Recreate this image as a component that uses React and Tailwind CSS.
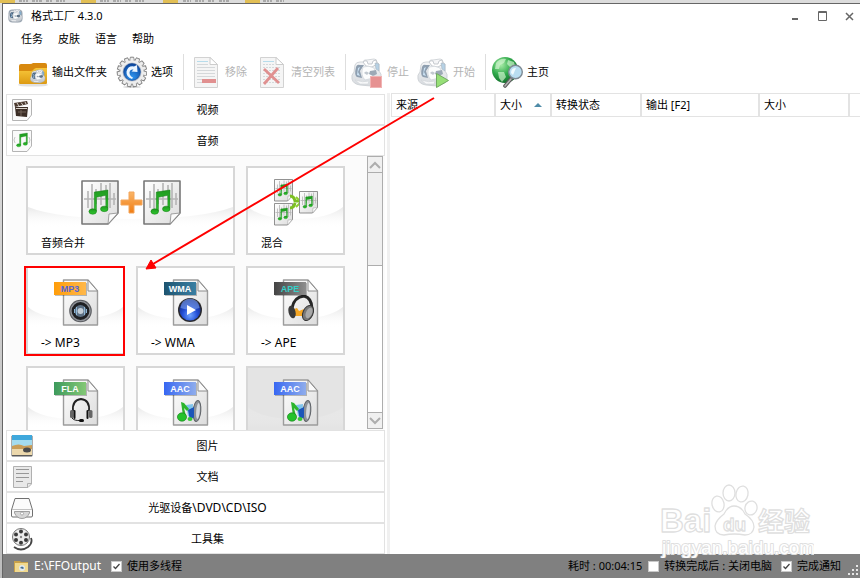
import React from "react";

const FONT = "font-['Noto_Sans','Noto_Sans_CJK_SC',sans-serif]";

/* ---------- gradients shared by the drawings ---------- */
function Defs() {
  return (
    <svg width="0" height="0" className="absolute" aria-hidden="true">
      <defs>
        <linearGradient id="paper" x1="0" y1="0" x2="1" y2="1">
          <stop offset="0" stopColor="#ffffff" />
          <stop offset="1" stopColor="#dcdcdc" />
        </linearGradient>
        <linearGradient id="gold" x1="0" y1="0" x2="0" y2="1">
          <stop offset="0" stopColor="#f9c93c" />
          <stop offset="1" stopColor="#dd9a12" />
        </linearGradient>
        <linearGradient id="green" x1="0" y1="0" x2="0" y2="1">
          <stop offset="0" stopColor="#1f9a1f" />
          <stop offset="1" stopColor="#2fc62f" />
        </linearGradient>
        <linearGradient id="orange" x1="0" y1="0" x2="0" y2="1">
          <stop offset="0" stopColor="#fbb668" />
          <stop offset="1" stopColor="#f07c12" />
        </linearGradient>
        <linearGradient id="shell" x1="0" y1="0" x2="0" y2="1">
          <stop offset="0" stopColor="#f4f5f7" />
          <stop offset="1" stopColor="#bcc2c9" />
        </linearGradient>
        <radialGradient id="blue" cx=".5" cy=".75" r=".7">
          <stop offset="0" stopColor="#6fa4ff" />
          <stop offset=".5" stopColor="#2450d8" />
          <stop offset="1" stopColor="#10247c" />
        </radialGradient>
        <radialGradient id="gearCore" cx=".5" cy=".8" r=".8">
          <stop offset="0" stopColor="#2f94ee" />
          <stop offset="1" stopColor="#0b459c" />
        </radialGradient>
        <radialGradient id="globe" cx=".35" cy=".3" r=".8">
          <stop offset="0" stopColor="#a8eca8" />
          <stop offset=".5" stopColor="#2fa94a" />
          <stop offset="1" stopColor="#0c5f24" />
        </radialGradient>
        <linearGradient id="swoosh" x1="0" y1="0" x2="0" y2="1">
          <stop offset="0" stopColor="#e9e9e9" />
          <stop offset="1" stopColor="#ffffff" stopOpacity="0" />
        </linearGradient>
        <linearGradient id="tagMp3"><stop offset="0" stopColor="#ff9d0a" /><stop offset="1" stopColor="#ffb84a" /></linearGradient>
        <linearGradient id="tagWma"><stop offset="0" stopColor="#1d5470" /><stop offset="1" stopColor="#3a7fa3" /></linearGradient>
        <linearGradient id="tagApe"><stop offset="0" stopColor="#444444" /><stop offset="1" stopColor="#8e8e8e" /></linearGradient>
        <linearGradient id="tagFla"><stop offset="0" stopColor="#3d9a5c" /><stop offset="1" stopColor="#84c876" /></linearGradient>
        <linearGradient id="tagAac"><stop offset="0" stopColor="#3767f2" /><stop offset="1" stopColor="#8fadec" /></linearGradient>
      </defs>
    </svg>
  );
}

/* ---------- small drawings ---------- */
function Machine() {
  return (
    <g strokeLinejoin="round">
      <path d="M1 21 Q0 17 3 14 L4 7 Q5 4 9 4 L12 4 Q13 1 16 2 L23 1 Q26 1 26 4 L28 6 L28 13 Q31 16 30 20 Q30 25 25 26 L20 28 L9 27 Q2 26 1 21Z" fill="url(#shell)" stroke="#a5acb4" strokeWidth=".8" />
      <path d="M12 4 Q14 2 16 3 L17 6 L21 6 L22 3 L25 2 L26 6 L21 9 L15 8Z" fill="#ffffff" stroke="#8d96a0" strokeWidth=".8" />
      <path d="M5 9 Q6 6 9 7 L13 7 L9 13 L11 20 L6 19 Q3 17 5 9Z" fill="#45607c" />
      <path d="M7 10 L9 9 L7 14 L9 18 L6 17Z" fill="#a9d0ee" />
      <path d="M12 9 Q18 7 23 10 Q26 15 22 20 L14 22 Q9 17 12 9Z" fill="#fbfcfd" stroke="#b3bbc4" strokeWidth=".8" />
      <path d="M19 13 L25 12 L26 16 L22 18 L18 16Z" fill="#5b7186" />
      <path d="M13 15 Q15 12 18 15 L16 17Z" fill="#9aa6b2" />
      <path d="M24 5 L28 6 L28 13 L25 11Z" fill="#86b4d4" stroke="#6c8499" strokeWidth=".6" />
      <path d="M4 22 Q12 25 18 23 L17 26 L9 26Z" fill="#f3f4f6" stroke="#b1b8c0" strokeWidth=".6" />
    </g>
  );
}

function AppIcon() {
  return (
    <svg width="15" height="14" viewBox="0 0 32 30" aria-hidden="true">
      <rect x="1" y="1" width="30" height="28" rx="8" fill="#9ba6b2" />
      <Machine />
    </svg>
  );
}

function FolderIcon() {
  return (
    <svg width="32" height="32" viewBox="0 0 32 32" aria-hidden="true">
      <ellipse cx="17" cy="29" rx="15" ry="1.6" fill="#e1e1e1" />
      <path d="M3 10 Q3 8 5 8 L14 8 Q16 8 17 7 Q18 7 20 7 L29 7 Q31 7 31 9 L31 26 L3 26Z" fill="#d8890f" />
      <path d="M3 15 L15 15 Q17 15 18 13 L20 12 L31 12 L31 27 Q31 28 30 28 L4 28 Q3 28 3 27Z" fill="url(#gold)" />
      <g transform="translate(14 13) scale(.5)">
        <Machine />
      </g>
    </svg>
  );
}

const TEETH = [0, 24, 48, 72, 96, 120, 144, 168, 192, 216, 240, 264, 288, 312, 336];

function GearIcon() {
  return (
    <svg width="32" height="32" viewBox="0 0 32 32" aria-hidden="true">
      <ellipse cx="17" cy="31" rx="9" ry="1" fill="#d9d9d9" />
      {TEETH.map((a) => (
        <path key={a} d="M14.800 4.500 L15.400 1.200 H18.600 L19.200 4.500Z" fill="#ededed" stroke="#858585" strokeWidth="1" transform={`rotate(${a} 17 16)`} />
      ))}
      <circle cx="17" cy="16" r="12.200" fill="#ededed" stroke="#999999" strokeWidth=".8" />
      {TEETH.map((a) => (
        <path key={a} d="M15.600 5.500 V2.200 H18.400 V5.500Z" fill="#ededed" transform={`rotate(${a} 17 16)`} />
      ))}
      <circle cx="17" cy="16" r="9.600" fill="#bfc7d1" />
      <circle cx="17" cy="16" r="8.400" fill="url(#gearCore)" stroke="#0d3f8f" strokeWidth=".6" />
      <path d="M17 23 Q11 21 11.500 15.500 Q13 9.500 19 10.500 L22 9 L22.500 16 L16.500 15.500 L18.500 13.500 Q15 13 14.500 16.500 Q14.500 20 18 21.500Z" fill="#eaf5ff" />
    </svg>
  );
}

function DocIcon({ kind }) {
  return (
    <svg width="32" height="32" viewBox="0 0 32 32" aria-hidden="true">
      <path d="M5.500 1.500 H21 L28.500 8.500 V31.500 H5.500Z" fill="#f5f5f5" stroke="#d2d2d2" />
      <path d="M21 1.500 V8.500 H28.500Z" fill="#ffffff" stroke="#cccccc" />
      <path d="M8 5.500 H19" stroke="#b7dceb" />
      <path
        d="M8 8.500 H19 M8 11.500 H26 M8 14.500 H26 M8 17.500 H26 M8 20.500 H26 M8 23.500 H26 M8 26.500 H26"
        stroke="#d5d8da"
        strokeDasharray={kind === "clear" ? "2 1" : undefined}
      />
      {kind === "remove" ? (
        <rect x="13" y="23" width="14" height="4" fill="#e19090" />
      ) : (
        <path d="M9 13 L24 27 M23 12 L9 28" stroke="#e09090" strokeWidth="2.800" />
      )}
    </svg>
  );
}

function MachineIcon({ kind }) {
  return (
    <svg width="32" height="32" viewBox="0 0 32 32" aria-hidden="true">
      <g opacity=".6" transform="translate(0 2)">
        <Machine />
      </g>
      {kind === "stop" ? (
        <rect x="19.500" y="20.500" width="11" height="11" fill="#e69191" stroke="#f0b3b3" />
      ) : (
        <path d="M19.500 17.500 L31.500 24.500 L19.500 31.500Z" fill="#97df77" stroke="#71a962" />
      )}
    </svg>
  );
}

function GlobeIcon() {
  return (
    <svg width="32" height="32" viewBox="0 0 32 32" aria-hidden="true">
      <circle cx="14" cy="14" r="13" fill="url(#globe)" />
      <path d="M5 7 Q9 2 15 3 L13 7 L9 9 L8 13 L4 13Z M17 4 L23 6 L24 10 L19 11 L16 8Z M7 16 L13 16 L15 21 L11 26 L8 22Z" fill="#d8f7d5" opacity=".65" />
      <path d="M20 23 L14 30" stroke="#5e5e5e" strokeWidth="3.600" strokeLinecap="round" />
      <path d="M20 23 L14 30" stroke="#b5b5b5" strokeWidth="1.500" strokeLinecap="round" />
      <circle cx="24.500" cy="16" r="6.800" fill="#b9def1" stroke="#7e8a94" strokeWidth="1.400" />
      <path d="M20 17 Q20 12 25 12 L22 19Z" fill="#f0fbff" />
    </svg>
  );
}

function Notes({ x, y, s }) {
  return (
    <g transform={`translate(${x} ${y}) scale(${s})`} fill="url(#green)" stroke="#117a11" strokeWidth=".5">
      <path d="M6 2 L19 0 L19 17 L17 17 L17 5 L8 7 L8 20 L6 20Z" />
      <ellipse cx="4.500" cy="20.500" rx="3.600" ry="2.600" />
      <ellipse cx="15.500" cy="18" rx="3.600" ry="2.600" />
    </g>
  );
}

function MusicSheet({ x, y, s }) {
  return (
    <g transform={`translate(${x} ${y}) scale(${s})`}>
      <path d="M1 1 H37 V33 L27 44 H1Z" fill="url(#paper)" stroke="#777777" strokeWidth="1.600" strokeLinejoin="round" />
      <path d="M3 19 H35 M7 11 V28 M11 4 V30 M15 9 V24 M20 3 V25 M25 5 V19 M29 3 V28 M33 13 V25" stroke="#b5b5b5" strokeWidth="1.600" />
      <path d="M27 44 L28 34 L37 33Z" fill="#fafafa" stroke="#8c8c8c" strokeWidth=".8" />
      <Notes x="7" y="10" s="1.050" />
    </g>
  );
}

function MergeIcon() {
  return (
    <svg width="102" height="48" viewBox="0 0 102 48" aria-hidden="true">
      <MusicSheet x="1" y="2" s="1" />
      <path d="M49 14 H54 V22 H62 V27 H54 V35 H49 V27 H41 V22 H49Z" fill="url(#orange)" stroke="#f3a55a" />
      <MusicSheet x="63" y="2" s="1" />
    </svg>
  );
}

function MixIcon() {
  return (
    <svg width="46" height="48" viewBox="0 0 46 48" aria-hidden="true">
      <MusicSheet x="1" y="1" s=".500" />
      <MusicSheet x="1" y="25" s=".500" />
      <path d="M17 18 Q21 18 22 23 H28 M17 30 Q21 30 22 25" fill="none" stroke="#7cbf22" strokeWidth="3" />
      <path d="M23 19 L28 24 L23 29" fill="none" stroke="#8ed02e" strokeWidth="2" />
      <MusicSheet x="26" y="13" s=".500" />
    </svg>
  );
}

function FormatArt({ art }) {
  if (art === "speaker")
    return (
      <g>
        <circle cx="26.500" cy="33" r="11.300" fill="#5a5c60" />
        <circle cx="26.500" cy="33" r="9.600" fill="#1f2023" stroke="#909399" strokeWidth="1.400" />
        <circle cx="26.500" cy="33" r="6" fill="#5c6f83" />
        <circle cx="26.500" cy="33" r="3" fill="#c3cdd6" />
        <path d="M20.500 31 V35 M22.500 29 V37 M30.500 29 V37 M32.500 31 V35" stroke="#8eb6d6" />
      </g>
    );
  if (art === "play")
    return (
      <g>
        <circle cx="26" cy="32" r="12" fill="#2a2a2e" />
        <circle cx="26" cy="32" r="10.500" fill="url(#blue)" />
        <path d="M16.500 30 A9.500 9.500 0 0 1 35.500 30 Q26 33 16.500 30Z" fill="#7fa4f0" opacity=".6" />
        <path d="M23 27 L32 32 L23 37Z" fill="#ffffff" />
      </g>
    );
  if (art === "phones")
    return (
      <g>
        <path d="M18 30 Q20 19 30 18 Q38 20 38 31" fill="none" stroke="#262626" strokeWidth="3" />
        <path d="M20 31 L23 30 L25 33 L30 31 L28 38 L21 38Z" fill="#f5a623" />
        <ellipse cx="18" cy="34" rx="3.500" ry="6.500" fill="#3a3a3a" transform="rotate(-14 18 34)" />
        <ellipse cx="34" cy="35" rx="5" ry="8" fill="#777777" stroke="#333333" transform="rotate(24 34 35)" />
        <ellipse cx="35" cy="35" rx="3" ry="5.500" fill="#a8a8a8" transform="rotate(24 35 35)" />
      </g>
    );
  if (art === "headset")
    return (
      <g>
        <path d="M19 33 Q18 22 27 21 Q36 22 35 33" fill="none" stroke="#222222" strokeWidth="1.800" />
        <rect x="16" y="32" width="3.500" height="8" rx="1.500" fill="#666666" />
        <rect x="19.500" y="32" width="2" height="9" rx="1" fill="#111111" />
        <rect x="35" y="32" width="3.500" height="8" rx="1.500" fill="#666666" />
        <rect x="32.500" y="32" width="2" height="9" rx="1" fill="#111111" />
        <path d="M18 40 Q20 43 27 42.500" fill="none" stroke="#222222" />
        <rect x="25" y="41" width="5" height="3" rx="1.500" fill="#111111" />
      </g>
    );
  return (
    <g>
      <ellipse cx="33" cy="33" rx="3.800" ry="10.500" fill="#8e9399" stroke="#5d6166" transform="rotate(5 33 33)" />
      <ellipse cx="34" cy="33" rx="1.800" ry="8" fill="#d5d9de" transform="rotate(5 34 33)" />
      <path d="M22 27 L29 26 L28 40 L24 38Z" fill="#7fc4ec" />
      <path d="M24 32 L30 29 L30 39 L26 42Z" fill="#1c56b8" />
      <path d="M17 24 L20 25 L25 31 L23 33 L20 30 L22 38 L19 38Z" fill="#2db52d" />
      <ellipse cx="18" cy="39" rx="4.600" ry="4.200" fill="#25c22b" stroke="#137a18" strokeWidth=".6" />
      <ellipse cx="26" cy="41" rx="2.500" ry="2" fill="#37c837" />
    </g>
  );
}

function FormatIcon({ tag, fill, ink, art }) {
  return (
    <svg width="48" height="50" viewBox="0 0 48 50" aria-hidden="true">
      <path d="M9.500 2 H34 L43.500 13 V47 H9.500Z" fill="url(#paper)" stroke="#9c9c9c" strokeWidth="1.400" strokeLinejoin="round" />
      <path d="M34 2 V13 H43.500Z" fill="#fbfbfb" stroke="#8c8c8c" strokeLinejoin="round" />
      <FormatArt art={art} />
      <rect x="1" y="5" width="32" height="13" fill="#00000040" />
      <rect x="0" y="4" width="32" height="13" fill={fill} />
      <text x="16" y="14" fontSize="9" fontWeight="700" fontFamily="Liberation Sans, sans-serif" textAnchor="middle" fill={ink}>
        {tag}
      </text>
    </svg>
  );
}

function SectionIcon({ kind }) {
  const page = (
    <path d="M1.500 1.500 H20.500 V17 L16 22.500 H1.500Z" fill="#fafafa" stroke="#b4b4b4" />
  );
  return (
    <svg width="22" height="24" viewBox="0 0 22 24" aria-hidden="true" className="shrink-0">
      {kind === "video" && (
        <g>
          {page}
          <path d="M4 9 H17 L16 19 L5 18Z" fill="#3b2d25" />
          <path d="M3 5 L16 3 L17 6 L4 9Z" fill="#4b3a30" />
          <path d="M6 5 L8 8 M10 4.500 L12 7 M14 4 L15 6 M5 10.500 H16" stroke="#d8d0c8" />
          <path d="M7 14 H15 M10 12 V18" stroke="#75655a" />
        </g>
      )}
      {kind === "audio" && (
        <g>
          {page}
          <path d="M4 8 Q2 11 4 14 M18 8 Q20 11 18 14" fill="none" stroke="#c8c8c8" />
          <Notes x="5" y="4" s=".600" />
        </g>
      )}
      {kind === "picture" && (
        <g>
          <rect x=".5" y="1.500" width="21" height="21" rx="1" fill="#5a5a5a" />
          <rect x="1" y="1" width="20" height="11" fill="#3fa8dc" />
          <rect x="1" y="6" width="20" height="6" fill="#a4dbee" />
          <rect x="1" y="12" width="20" height="9" fill="#ecd8ac" />
          <path d="M1 12 Q8 9 13 12 L21 11 V15 H1Z" fill="#c99d58" />
          <ellipse cx="16" cy="16" rx="4" ry="2.500" fill="#4b4b4b" />
        </g>
      )}
      {kind === "document" && (
        <g>
          <path d="M2.500 1.500 H20.500 V19 L17 22.500 H2.500Z" fill="#e9e9e9" stroke="#b0b0b0" />
          <path d="M5 4.500 H18 M5 8.500 H18 M5 12.500 H18 M5 16.500 H12" stroke="#989898" />
          <path d="M16.500 22 V18.500 H20" fill="none" stroke="#b0b0b0" />
        </g>
      )}
      {kind === "disc" && (
        <g>
          <path d="M4 2.500 H18 L21.500 14 V20 Q21.500 21 20 21 H2 Q.5 21 .5 20 V14Z" fill="#fbfbfb" stroke="#707070" />
          <path d="M1 13.500 H21" stroke="#c2c2c2" />
          <path d="M3.500 15.500 H18.500 V17 Q16 22.500 11 22.500 Q6 22.500 3.500 17Z" fill="#d6d6d6" stroke="#8b8b8b" strokeWidth=".8" />
          <circle cx="11" cy="17.500" r="1.500" fill="#ffffff" stroke="#888888" strokeWidth=".6" />
        </g>
      )}
      {kind === "tools" && (
        <g>
          <path d="M3 20 Q10 25 17 20 Q22 16 20 11" fill="none" stroke="#444444" strokeWidth="1.800" />
          <circle cx="10" cy="10" r="8.500" fill="#ececec" stroke="#777777" />
          <g fill="#3a3a3a">
            <circle cx="10" cy="4.500" r="2" />
            <circle cx="15" cy="7.500" r="2" />
            <circle cx="15" cy="13" r="2" />
            <circle cx="10" cy="15.800" r="2" />
            <circle cx="5" cy="13" r="2" />
            <circle cx="5" cy="7.500" r="2" />
          </g>
          <circle cx="10" cy="10" r="1.200" fill="#888888" />
        </g>
      )}
    </svg>
  );
}

/* ---------- layout pieces ---------- */
function TitleBar() {
  return (
    <header className="flex h-6 items-center pl-[5px] pr-[6px]">
      <AppIcon />
      <h1 className="ml-2 flex-1 text-[11px] leading-4">格式工厂 4.3.0</h1>
      <div className="flex items-center gap-[18px] text-[#666666]">
        <button type="button" aria-label="最小化">
          <svg width="9" height="10" viewBox="0 0 9 10"><path d="M1 8 H7" stroke="currentColor" strokeWidth="2" /></svg>
        </button>
        <button type="button" aria-label="最大化">
          <svg width="9" height="10" viewBox="0 0 9 10"><path d="M.5 .5 H8.500 V9.500 H.5Z M0 1.500 H9" fill="none" stroke="currentColor" /></svg>
        </button>
        <button type="button" aria-label="关闭">
          <svg width="9" height="10" viewBox="0 0 9 10"><path d="M1 2 L8 9 M8 2 L1 9" stroke="currentColor" strokeWidth="1.500" /></svg>
        </button>
      </div>
    </header>
  );
}

function ToolButton({ icon, label, disabled }) {
  return (
    <button type="button" disabled={disabled} className="flex items-center gap-1 disabled:text-[#b4b4b4]">
      {icon}
      <span>{label}</span>
    </button>
  );
}

function ToolGroup({ children }) {
  return <div className="ml-[10px] flex h-9 items-center gap-2 border-l border-[#dedede] pl-[5px]">{children}</div>;
}

function Toolbar() {
  return (
    <div role="toolbar" className="flex h-[43px] items-center pl-[13px]">
      <div className="flex items-center gap-2">
        <ToolButton icon={<FolderIcon />} label="输出文件夹" />
        <ToolButton icon={<GearIcon />} label="选项" />
      </div>
      <ToolGroup>
        <ToolButton icon={<DocIcon kind="remove" />} label="移除" disabled />
        <ToolButton icon={<DocIcon kind="clear" />} label="清空列表" disabled />
      </ToolGroup>
      <ToolGroup>
        <ToolButton icon={<MachineIcon kind="stop" />} label="停止" disabled />
        <ToolButton icon={<MachineIcon kind="start" />} label="开始" disabled />
      </ToolGroup>
      <ToolGroup>
        <ToolButton icon={<GlobeIcon />} label="主页" />
      </ToolGroup>
    </div>
  );
}

function Section({ kind, label }) {
  return (
    <button type="button" className="flex h-[31px] w-full shrink-0 items-center border border-[#e2e2e2] bg-white pl-1 pr-[2px]">
      <SectionIcon kind={kind} />
      <span className="flex-1 text-center">{label}</span>
    </button>
  );
}

function Card({ label, icon, wide, active, marked, center }) {
  return (
    <button
      type="button"
      className={`relative flex h-[89px] flex-col border-2 border-[#d7d7d7] pt-[10px] text-left ${wide ? "col-span-2" : ""} ${active ? "bg-[#e4e4e4]" : "bg-white"}`}
    >
      <svg className="absolute inset-0 h-full w-full" viewBox="0 0 95 85" preserveAspectRatio="none" aria-hidden="true">
        <path d="M0 39 Q14 51 47 51 Q80 51 95 39 V60 H0Z" fill="url(#swoosh)" opacity={active ? ".4" : "1"} />
      </svg>
      <span className={`relative h-[50px] ${center ? "self-center" : "pl-[26px]"}`}>{icon}</span>
      <span className="relative mt-[7px] pl-[13px] leading-4">{label}</span>
      {marked && <span className="absolute -bottom-[3px] -left-[4px] -right-[2px] -top-[2px] border-2 border-[#fe0000]" />}
    </button>
  );
}

function Latin({ children }) {
  return <span className="text-[12px]">{children}</span>;
}

function CardPane() {
  return (
    <div className="flex min-h-0 flex-1 justify-between overflow-hidden bg-[#fbfbfb] pr-[2px]">
      <div className="grid grid-cols-[99px_99px_99px] content-start gap-[11px] pl-5 pt-[10px]">
        <Card wide center icon={<MergeIcon />} label="音频合并" />
        <Card center icon={<MixIcon />} label="混合" />
        <Card marked label={<Latin>-&gt; MP3</Latin>} icon={<FormatIcon tag="MP3" fill="url(#tagMp3)" ink="#5566d8" art="speaker" />} />
        <Card label={<Latin>-&gt; WMA</Latin>} icon={<FormatIcon tag="WMA" fill="url(#tagWma)" ink="#ffffff" art="play" />} />
        <Card label={<Latin>-&gt; APE</Latin>} icon={<FormatIcon tag="APE" fill="url(#tagApe)" ink="#35d0c8" art="phones" />} />
        <Card icon={<FormatIcon tag="FLA" fill="url(#tagFla)" ink="#ffffff" art="headset" />} />
        <Card icon={<FormatIcon tag="AAC" fill="url(#tagAac)" ink="#ffffff" art="horn" />} />
        <Card active icon={<FormatIcon tag="AAC" fill="url(#tagAac)" ink="#ffffff" art="horn" />} />
      </div>
      <div className="mb-[1px] flex w-4 flex-col border border-[#adadad] bg-white">
        <button type="button" aria-label="向上滚动" className="flex h-[15px] items-center justify-center bg-[#f0f0f0]">
          <svg width="12" height="8" viewBox="0 0 12 8"><path d="M1 7 L6 2 L11 7" fill="none" stroke="#adadad" strokeWidth="2" /></svg>
        </button>
        <div className="h-[94px] border-y border-[#adadad] bg-[#f0f0f0]" />
        <div className="flex-1" />
        <button type="button" aria-label="向下滚动" className="flex h-4 items-center justify-center border-t border-[#adadad] bg-[#f0f0f0]">
          <svg width="12" height="8" viewBox="0 0 12 8"><path d="M1 1 L6 6 L11 1" fill="none" stroke="#adadad" strokeWidth="2" /></svg>
        </button>
      </div>
    </div>
  );
}

function TaskTable() {
  const th = "h-6 border border-[#e3e3e3] px-1 text-left font-normal";
  return (
    <table className="w-full table-fixed border-separate border-spacing-0">
      <thead>
        <tr>
          <th className={`${th} w-[104px]`}>来源</th>
          <th className={`${th} w-14`}>
            <span className="flex items-center justify-between pr-1">
              大小
              <svg width="8" height="4" viewBox="0 0 8 4" aria-hidden="true"><path d="M0 4 L4 0 L8 4Z" fill="#4f8ba8" /></svg>
            </span>
          </th>
          <th className={`${th} w-[90px]`}>转换状态</th>
          <th className={`${th} w-[118px]`}>输出 [F2]</th>
          <th className={`${th} w-[90px]`}>大小</th>
          <td className="h-6 border-y border-l border-[#e3e3e3]" />
        </tr>
      </thead>
    </table>
  );
}

function Check({ id, label, defaultChecked }) {
  return (
    <span className="flex items-center gap-[5px]">
      <span className="relative flex size-[11px]">
        <input
          id={id}
          type="checkbox"
          defaultChecked={defaultChecked}
          className="peer size-[11px] appearance-none border border-[#c9c9c9] bg-white"
        />
        <svg className="pointer-events-none absolute inset-0 hidden peer-checked:block" width="11" height="11" viewBox="0 0 11 11" aria-hidden="true">
          <path d="M2.500 5.500 L4.500 7.500 L8.500 3" fill="none" stroke="#444444" strokeWidth="1.300" />
        </svg>
      </span>
      <label htmlFor={id}>{label}</label>
    </span>
  );
}

function StatusBar() {
  return (
    <footer className="flex h-6 shrink-0 items-center justify-between bg-[#808080] pl-[11px] pr-[1px]">
      <div className="flex items-center gap-[10px]">
        <button type="button" className="flex items-center gap-[5px] text-[12px] text-white">
          <svg width="15" height="13" viewBox="0 0 15 13" aria-hidden="true">
            <path d="M0 1 H6 L7 2 H14 V12 H0Z" fill="#c9a24a" />
            <rect x="1" y="3" width="13" height="9" fill="#f1d98e" />
            <circle cx="8" cy="8" r="3" fill="#dfe8ef" />
            <path d="M6 8 Q8 5 10 8 L9 9Z" fill="#49708f" />
          </svg>
          E:\FFOutput
        </button>
        <Check id="threads" label="使用多线程" defaultChecked />
      </div>
      <div className="flex items-center gap-[6px]">
        <span>耗时 : 00:04:15</span>
        <Check id="shutdown" label="转换完成后 : 关闭电脑" />
        <span className="ml-[3px]">
          <Check id="notify" label="完成通知" defaultChecked />
        </span>
        <svg width="12" height="10" viewBox="0 0 12 10" className="mt-2" aria-hidden="true">
          <path d="M9 0h2v2h-2z M5 4h2v2h-2z M9 4h2v2h-2z M1 8h2v2h-2z M5 8h2v2h-2z M9 8h2v2h-2z" fill="#e6e6e6" />
        </svg>
      </div>
    </footer>
  );
}

function Watermark() {
  return (
    <svg className="pointer-events-none absolute bottom-[20px] right-[46px]" width="156" height="76" viewBox="0 0 156 76" aria-hidden="true">
      <g fill="#ffffff" stroke="#dfdfdf" strokeWidth="1.300" strokeLinejoin="round">
        <text x="2" y="50" fontSize="33" fontWeight="700" fontFamily="Liberation Sans, sans-serif">Bai</text>
        <ellipse cx="60" cy="22" rx="6" ry="8" transform="rotate(-12 60 22)" />
        <ellipse cx="71" cy="11" rx="6" ry="8" />
        <ellipse cx="84" cy="12" rx="6" ry="8" transform="rotate(12 84 12)" />
        <ellipse cx="93" cy="26" rx="6" ry="7" transform="rotate(15 93 26)" />
        <path d="M76 24 Q83 24 87 32 Q96 38 96 45 Q95 53 87 53 Q76 51 66 53 Q57 53 57 44 Q58 38 66 32 Q70 24 76 24Z" />
        <text x="65" y="49" fontSize="19" fontWeight="700" fontFamily="Liberation Sans, sans-serif">du</text>
        <text x="100" y="49" fontSize="26" fontWeight="700" fontFamily="Noto Sans CJK SC, sans-serif">经验</text>
        <text x="4" y="72" fontSize="19" fontFamily="Liberation Sans, sans-serif" strokeWidth="2" paintOrder="stroke">jingyan.baidu.com</text>
      </g>
    </svg>
  );
}

/* Sliver of the file manager that shows behind the window. */
function BackdropStrip() {
  return (
    <svg className="h-[3px] w-full shrink-0" viewBox="0 0 860 3" preserveAspectRatio="xMinYMin slice" aria-hidden="true">
      <g fill="#e2bf55">
        <path d="M0 0h15v3h-15z M81 0h15v3h-15z M163 0h15v3h-15z M245 0h15v3h-15z" />
      </g>
      <path d="M19 1h9 M32 1h10 M46 1h7 M56 1h9 M100 1h9 M113 1h8 M125 1h6 M135 1h9 M183 1h8 M195 1h9 M208 1h7 M219 1h10 M263 1h9 M276 1h8" stroke="#777777" strokeDasharray="3 1 2 1" />
    </svg>
  );
}

export default function App() {
  return (
    <div className={`relative flex h-screen flex-col overflow-hidden bg-[#dcdcdc] text-[11px] leading-4 text-black ${FONT}`}>
      <Defs />
      <BackdropStrip />
      <div className="flex min-h-0 flex-1">
        <div className="w-[2px] shrink-0 bg-linear-to-b from-[#e3e3e3] to-[#bdbdbd]" />
        <div className="relative flex min-w-0 flex-1 flex-col border-l border-t border-[#666666] bg-white">
          <TitleBar />
          <nav className="flex h-[22px] items-center gap-[15px] pl-[18px]">
            {["任务", "皮肤", "语言", "帮助"].map((m) => (
              <button type="button" key={m}>{m}</button>
            ))}
          </nav>
          <Toolbar />
          <main className="flex min-h-0 flex-1 bg-white">
            <div className="flex w-[382px] shrink-0 flex-col pl-[3px] pt-[1px]">
              <Section kind="video" label="视频" />
              <Section kind="audio" label="音频" />
              <CardPane />
              <Section kind="picture" label="图片" />
              <Section kind="document" label="文档" />
              <Section kind="disc" label={<>光驱设备<Latin>\DVD\CD\ISO</Latin></>} />
              <Section kind="tools" label="工具集" />
            </div>
            <div className="ml-[2px] w-[3px] shrink-0 bg-[#f0f0f0]" />
            <section className="ml-[1px] min-w-0 flex-1">
              <TaskTable />
            </section>
          </main>
          <StatusBar />
          <Watermark />
        </div>
      </div>
      <svg className="pointer-events-none absolute left-[145px] top-[97px]" width="290" height="174" viewBox="0 0 290 174" aria-hidden="true">
        <path d="M289 1 L8 167" stroke="#fe0000" strokeWidth="2" />
        <path d="M1 172 L6 163 L11 171Z" fill="#fe0000" stroke="#fe0000" strokeLinejoin="round" />
      </svg>
    </div>
  );
}
